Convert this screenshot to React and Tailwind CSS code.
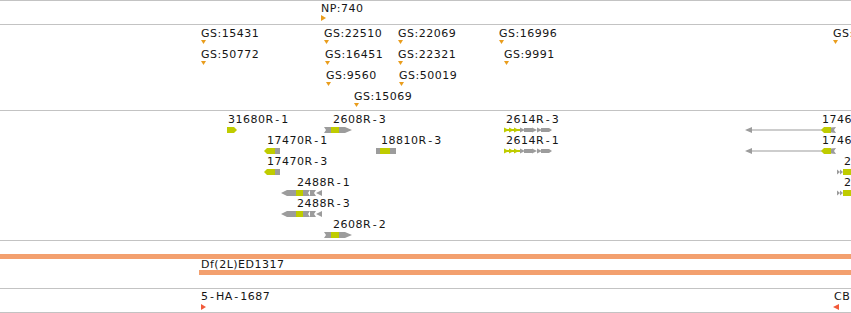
import React from "react";

const GREEN = "#bfcc00";
const GRAY = "#9c9c9c";
const ORANGE = "#e99d1d";
const RED = "#f25a3a";

// label: hyphens in the source font are wider, so pad them a little
function Label({ text, x, y }) {
  const parts = text.split("-");
  return (
    <div
      className="absolute whitespace-nowrap text-[11px] leading-[11px] tracking-[0.5px] text-[#151515]"
      style={{ left: x, top: y }}
    >
      {parts.map((p, i) => (
        <React.Fragment key={i}>
          {i > 0 && <span className="mx-[1.5px]">-</span>}
          {p}
        </React.Fragment>
      ))}
    </div>
  );
}

function Shape({ x, y, w, h = 6, children }) {
  return (
    <svg className="absolute" style={{ left: x, top: y }} width={w} height={h} viewBox={`0 0 ${w} ${h}`}>
      {children}
    </svg>
  );
}

const TriDown = ({ x, y }) => (
  <Shape x={x} y={y} w={5} h={4}>
    <polygon points="0,0 5,0 2.5,4" fill={ORANGE} />
  </Shape>
);
const TriRight = ({ x, y, color }) => (
  <Shape x={x} y={y} w={5} h={6}>
    <polygon points="0,0 5,3 0,6" fill={color} />
  </Shape>
);
const TriLeft = ({ x, y, color }) => (
  <Shape x={x} y={y} w={6} h={6}>
    <polygon points="6,0 0,3 6,6" fill={color} />
  </Shape>
);

// transcript glyphs, coordinates relative to glyph left edge
const GLYPHS = {
  g31680: {
    w: 10,
    el: <polygon points="0,0 7,0 10,3 7,6 0,6" fill={GREEN} />,
  },
  g2608: {
    w: 28,
    el: (
      <>
        <polygon points="0,0 7,0 7,6 0,6 2,3" fill={GRAY} />
        <rect x="7" y="0" width="8" height="6" fill={GREEN} />
        <polygon points="15,0 21,0 28,3 21,6 15,6" fill={GRAY} />
      </>
    ),
  },
  g17470: {
    w: 16,
    el: (
      <>
        <polygon points="3,0 11,0 11,6 3,6 0,3" fill={GREEN} />
        <rect x="11" y="0" width="5" height="6" fill={GRAY} />
      </>
    ),
  },
  g18810: {
    w: 20,
    el: (
      <>
        <rect x="0" y="0" width="4" height="6" fill={GRAY} />
        <rect x="4" y="0" width="10" height="6" fill={GREEN} />
        <rect x="14" y="0" width="6" height="6" fill={GRAY} />
      </>
    ),
  },
  g2488: {
    w: 41,
    el: (
      <>
        <polygon points="6,0 15,0 15,6 6,6 0,3" fill={GRAY} />
        <rect x="15" y="0" width="7" height="6" fill={GREEN} />
        <polygon points="22,0 29,0 27,3 29,6 22,6" fill={GRAY} />
        <polygon points="29,0 35,0 33,3 35,6 29,6" fill={GRAY} />
        <polygon points="41,0 35,3 41,6" fill={GRAY} />
      </>
    ),
  },
  g2614: {
    w: 48,
    el: (
      <>
        <rect x="0" y="2" width="16" height="2" fill={GREEN} />
        <polygon points="0,0.5 5,3 0,5.5" fill={GREEN} />
        <polygon points="5,0.5 10,3 5,5.5" fill={GREEN} />
        <polygon points="10,0.5 15,3 10,5.5" fill={GREEN} />
        <polygon points="16,0.5 21,3 16,5.5" fill={GRAY} />
        <rect x="20" y="1" width="8" height="4" fill={GRAY} />
        <polygon points="28,0.5 33,3 28,5.5" fill={GRAY} />
        <polygon points="33,0.5 38,3 33,5.5" fill={GRAY} />
        <rect x="37" y="1" width="5" height="4" fill={GRAY} />
        <polygon points="42,1 45,1 48,3 45,5 42,5" fill={GRAY} />
      </>
    ),
  },
  gLong: {
    w: 91,
    el: (
      <>
        <polygon points="0,3 7,0 7,6" fill={GRAY} />
        <rect x="7" y="2.5" width="70" height="1" fill={GRAY} />
        <polygon points="79,0 86,0 86,6 79,6 76,3" fill={GREEN} />
        <polygon points="86,0.5 91,0 89,3 91,6 86,5.5" fill={GRAY} />
      </>
    ),
  },
  gEdge: {
    w: 20,
    el: (
      <>
        <polygon points="0,0.5 3,3 0,5.5" fill={GRAY} />
        <polygon points="3,0.5 6,3 3,5.5" fill={GRAY} />
        <rect x="6" y="0" width="14" height="6" fill={GREEN} />
      </>
    ),
  },
};

const NP = [{ label: "NP:740", x: 321 }];

const GS = [
  { label: "GS:15431", x: 201, row: 0 },
  { label: "GS:50772", x: 201, row: 1 },
  { label: "GS:22510", x: 324, row: 0 },
  { label: "GS:16451", x: 325, row: 1 },
  { label: "GS:9560", x: 326, row: 2 },
  { label: "GS:15069", x: 354, row: 3 },
  { label: "GS:22069", x: 398, row: 0 },
  { label: "GS:22321", x: 398, row: 1 },
  { label: "GS:50019", x: 399, row: 2 },
  { label: "GS:16996", x: 499, row: 0 },
  { label: "GS:9991", x: 504, row: 1 },
  { label: "GS:17504", x: 833, row: 0 },
];

const TRANSCRIPTS = [
  { label: "31680R-1", lx: 228, gx: 227, row: 0, g: "g31680" },
  { label: "2608R-3", lx: 333, gx: 324, row: 0, g: "g2608" },
  { label: "2614R-3", lx: 506, gx: 504, row: 0, g: "g2614" },
  { label: "17466R-1", lx: 822, gx: 745, row: 0, g: "gLong" },
  { label: "17470R-1", lx: 267, gx: 264, row: 1, g: "g17470" },
  { label: "18810R-3", lx: 381, gx: 376, row: 1, g: "g18810" },
  { label: "2614R-1", lx: 506, gx: 504, row: 1, g: "g2614" },
  { label: "17466R-2", lx: 822, gx: 745, row: 1, g: "gLong" },
  { label: "17470R-3", lx: 267, gx: 264, row: 2, g: "g17470" },
  { label: "2608R-1", lx: 844, gx: 837, row: 2, g: "gEdge" },
  { label: "2488R-1", lx: 297, gx: 281, row: 3, g: "g2488" },
  { label: "2608R-4", lx: 844, gx: 837, row: 3, g: "gEdge" },
  { label: "2488R-3", lx: 297, gx: 281, row: 4, g: "g2488" },
  { label: "2608R-2", lx: 333, gx: 324, row: 5, g: "g2608" },
];

function Track({ h, children }) {
  return <div className={`relative shrink-0 border-b border-[#c3c3c3] ${h}`}>{children}</div>;
}

export default function App() {
  return (
    <div className="w-[851px] h-[313px] overflow-hidden bg-white font-['DejaVu_Sans',sans-serif]">
      <div className="flex flex-col border-t border-[#c3c3c3]">
        {/* protein track */}
        <Track h="h-[24px]">
          {NP.map((f) => (
            <React.Fragment key={f.label}>
              <Label text={f.label} x={f.x} y={2} />
              <TriRight x={f.x} y={14} color={ORANGE} />
            </React.Fragment>
          ))}
        </Track>

        {/* insertion sites */}
        <Track h="h-[86px]">
          {GS.map((f) => (
            <React.Fragment key={f.label}>
              <Label text={f.label} x={f.x} y={3 + f.row * 21} />
              <TriDown x={f.x} y={15 + f.row * 21} />
            </React.Fragment>
          ))}
        </Track>

        {/* transcripts */}
        <Track h="h-[130px]">
          {TRANSCRIPTS.map((t) => {
            const g = GLYPHS[t.g];
            return (
              <React.Fragment key={t.label}>
                <Label text={t.label} x={t.lx} y={3 + t.row * 21} />
                <Shape x={t.gx} y={16 + t.row * 21} w={g.w}>
                  {g.el}
                </Shape>
              </React.Fragment>
            );
          })}
        </Track>

        {/* deficiencies */}
        <Track h="h-[48px]">
          <div className="absolute left-0 right-0 top-[13px] h-[5px] bg-[#f3a06f]" />
          <Label text="Df(2L)ED1317" x={201} y={18} />
          <div className="absolute left-[199px] right-0 top-[29px] h-[5px] bg-[#f3a06f]" />
        </Track>

        {/* alleles */}
        <Track h="h-[24px]">
          <Label text="5-HA-1687" x={201} y={2} />
          <TriRight x={201} y={15} color={RED} />
          <Label text="CB-0482" x={834} y={2} />
          <TriLeft x={833} y={15} color={RED} />
        </Track>
      </div>
    </div>
  );
}
